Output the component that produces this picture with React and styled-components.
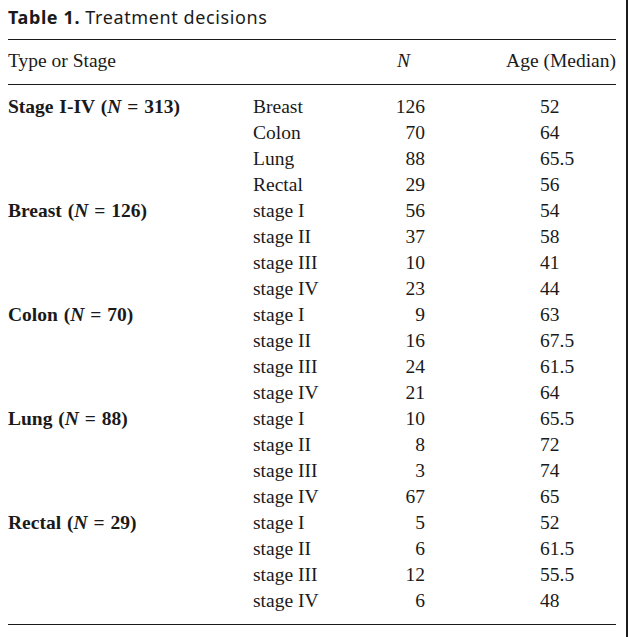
import React from "react";
import styled, { createGlobalStyle } from "styled-components";

const GlobalStyle = createGlobalStyle`
  html, body {
    margin: 0;
    padding: 0;
    background: #fff;
  }
`;

const Page = styled.div`
  width: 626px;
  height: 637px;
  border-right: 2px solid #1c1c1c;
  background: #fff;
  color: #1a1a1a;
  overflow: hidden;
`;

const Caption = styled.div`
  height: 39px;
  box-sizing: border-box;
  padding: 6px 0 0 8px;
  font-family: "Noto Sans", "Liberation Sans", sans-serif;
  font-size: 18px;
  letter-spacing: 0.6px;
  line-height: 23px;
  color: #1a1a1a;

  b {
    font-weight: 700;
  }
`;

const Table = styled.div`
  margin-left: 8px;
  width: 608px;
  border-top: 1.5px solid #1a1a1a;
  border-bottom: 1.5px solid #1a1a1a;
  font-family: "Liberation Serif", "Times New Roman", serif;
  font-size: 19.5px;
`;

const Grid = styled.div`
  display: grid;
  grid-template-columns: 245px 100px 72px 1fr;
  grid-auto-rows: 26px;
  line-height: 26px;
`;

const Head = styled(Grid)`
  padding: 8px 0 10px;
  border-bottom: 1.5px solid #1a1a1a;
`;

const Body = styled(Grid)`
  padding: 8.5px 0 10px;
`;

const Cell = styled.div`
  white-space: nowrap;
  text-align: ${(p) => p.$align || "left"};
  padding-right: ${(p) => p.$pr || 0}px;
  padding-left: ${(p) => p.$pl || 0}px;
`;

const Label = styled.b`
  font-weight: 700;
  word-spacing: 1px;
`;

const Italic = styled.i`
  font-style: italic;
`;

const groups = [
  {
    name: "Stage I-IV",
    n: 313,
    rows: [
      ["Breast", "126", "52"],
      ["Colon", "70", "64"],
      ["Lung", "88", "65.5"],
      ["Rectal", "29", "56"],
    ],
  },
  {
    name: "Breast",
    n: 126,
    rows: [
      ["stage I", "56", "54"],
      ["stage II", "37", "58"],
      ["stage III", "10", "41"],
      ["stage IV", "23", "44"],
    ],
  },
  {
    name: "Colon",
    n: 70,
    rows: [
      ["stage I", "9", "63"],
      ["stage II", "16", "67.5"],
      ["stage III", "24", "61.5"],
      ["stage IV", "21", "64"],
    ],
  },
  {
    name: "Lung",
    n: 88,
    rows: [
      ["stage I", "10", "65.5"],
      ["stage II", "8", "72"],
      ["stage III", "3", "74"],
      ["stage IV", "67", "65"],
    ],
  },
  {
    name: "Rectal",
    n: 29,
    rows: [
      ["stage I", "5", "52"],
      ["stage II", "6", "61.5"],
      ["stage III", "12", "55.5"],
      ["stage IV", "6", "48"],
    ],
  },
];

function App() {
  return (
    <>
      <GlobalStyle />
      <Page>
        <Caption>
          <b>Table 1.</b> Treatment decisions
        </Caption>
        <Table>
          <Head>
            <Cell>Type or Stage</Cell>
            <Cell />
            <Cell $align="right" $pr={15}>
              <Italic>N</Italic>
            </Cell>
            <Cell $align="right">Age (Median)</Cell>
          </Head>
          <Body>
            {groups.map((g) =>
              g.rows.map((r, i) => (
                <React.Fragment key={g.name + r[0]}>
                  <Cell>
                    {i === 0 && (
                      <Label>
                        {g.name} (<Italic>N</Italic> = {g.n})
                      </Label>
                    )}
                  </Cell>
                  <Cell>{r[0]}</Cell>
                  <Cell $align="right">{r[1]}</Cell>
                  <Cell $pl={115}>{r[2]}</Cell>
                </React.Fragment>
              ))
            )}
          </Body>
        </Table>
      </Page>
    </>
  );
}

export default App;
